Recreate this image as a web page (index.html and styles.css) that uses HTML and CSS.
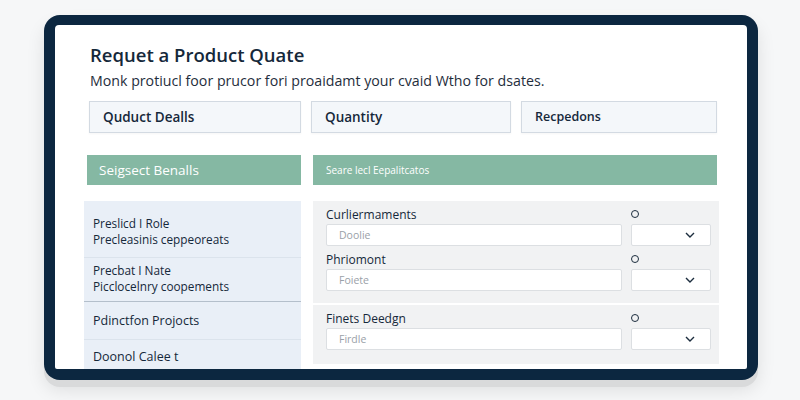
FILE: index.html
```html
<!DOCTYPE html>
<html lang="en">

<head>
    <meta charset="UTF-8">
    <meta name="viewport" content="width=device-width, initial-scale=1.0">
    <title>Request a Product Quote</title>
    <link rel="stylesheet" href="styles.css">
</head>

<body>
    <div class="device">
        <div class="screen">
            <h1 class="title">Requet a Product Quate</h1>
            <p class="lead">Monk protiucl foor prucor fori proaidamt your cvaid Wtho for dsates.</p>

            <div class="tabs">
                <div class="tab">Quduct Dealls</div>
                <div class="tab">Quantity</div>
                <div class="tab tab-small">Recpedons</div>
            </div>

            <div class="cols">
                <div class="side">
                    <div class="bar">Seigsect Benalls</div>
                    <ul class="list">
                        <li class="item item-first">
                            <span>Preslicd I Role</span>
                            <span>Precleasinis ceppeoreats</span>
                        </li>
                        <li class="item item-second">
                            <span>Precbat I Nate</span>
                            <span>Picclocelnry coopements</span>
                        </li>
                        <li class="item item-single">Pdinctfon Projocts</li>
                        <li class="item item-single item-last">Doonol Calee t</li>
                    </ul>
                </div>

                <div class="main">
                    <div class="bar bar-small">Seare lecl Eepalitcatos</div>
                    <div class="group">
                        <div class="field">
                            <label>Curliermaments</label>
                            <span class="dot"></span>
                            <div class="input">Doolie</div>
                            <div class="select">
                                <svg width="10" height="6" viewBox="0 0 10 6"><path d="M1 1l4 4 4-4" fill="none" stroke="#1c2d3e" stroke-width="1.4"/></svg>
                            </div>
                        </div>
                        <div class="field">
                            <label>Phriomont</label>
                            <span class="dot"></span>
                            <div class="input">Foiete</div>
                            <div class="select">
                                <svg width="10" height="6" viewBox="0 0 10 6"><path d="M1 1l4 4 4-4" fill="none" stroke="#1c2d3e" stroke-width="1.4"/></svg>
                            </div>
                        </div>
                    </div>
                    <div class="group group-second">
                        <div class="field">
                            <label>Finets Deedgn</label>
                            <span class="dot"></span>
                            <div class="input">Firdle</div>
                            <div class="select">
                                <svg width="10" height="6" viewBox="0 0 10 6"><path d="M1 1l4 4 4-4" fill="none" stroke="#1c2d3e" stroke-width="1.4"/></svg>
                            </div>
                        </div>
                    </div>
                </div>
            </div>
        </div>
    </div>
</body>

</html>
```

FILE: styles.css
```css
* {
    margin: 0;
    padding: 0;
    box-sizing: border-box;
    font-family: "Open Sans", "Noto Sans", sans-serif;
}

body {
    background-color: #f6f7f8;
    width: 800px;
    height: 400px;
    overflow: hidden;
}

.device {
    margin: 15px 0 0 44px;
    width: 714px;
    height: 365px;
    padding: 10px 11px 11px 11px;
    background-color: #0c2740;
    border-radius: 16px;
    box-shadow: 0 7px 0 #d9dadb, 0 10px 18px rgba(0, 0, 0, 0.10);
}

.screen {
    height: 100%;
    background-color: #ffffff;
    border-radius: 4px 4px 2px 2px;
    padding: 18px 30px 0 32px;
    overflow: hidden;
    color: #1b2b3b;
}

.title {
    padding-left: 3px;
    font-size: 18.5px;
    font-weight: 600;
    line-height: 24px;
    color: #15283a;
}

.lead {
    margin-top: 5px;
    padding-left: 3px;
    font-size: 14.2px;
    line-height: 18px;
    color: #1f2e3c;
}

.tabs {
    margin-top: 11px;
    display: grid;
    grid-template-columns: 212px 200px 1fr;
    gap: 10px;
    padding-left: 2px;
}

.tab {
    height: 32px;
    line-height: 30px;
    padding-left: 13px;
    background-color: #f4f7fa;
    border: 1px solid #d3dae2;
    box-shadow: 0 1px 2px rgba(0, 0, 0, 0.04);
    font-size: 13.5px;
    font-weight: 600;
    color: #16283a;
}

.tab-small {
    font-size: 12.5px;
}

.cols {
    margin-top: 22px;
    display: grid;
    grid-template-columns: 214px 1fr;
    gap: 12px;
}

.bar {
    height: 30px;
    line-height: 30px;
    padding-left: 12px;
    background-color: #85b8a3;
    color: #ffffff;
    font-size: 13.5px;
    font-weight: 500;
}

.bar-small {
    font-size: 10px;
    padding-left: 13px;
}

.list {
    list-style: none;
    margin-top: 16px;
    margin-left: -3px;
    background-color: #e9eff7;
}

.item {
    display: flex;
    flex-direction: column;
    padding-left: 9px;
    font-size: 11.8px;
    line-height: 16px;
    color: #15283a;
    border-bottom: 1px solid #dbe3ec;
}

.item-first {
    height: 57px;
    padding-top: 14px;
}

.item-second {
    height: 44px;
    padding-top: 4px;
    border-bottom-color: #b4bfcb;
}

.item-single {
    height: 38px;
    justify-content: center;
    font-size: 12.5px;
}

.item-last {
    height: 40px;
    justify-content: flex-start;
    padding-top: 9px;
    border-bottom: none;
}

.group {
    margin-top: 16px;
    background-color: #f1f2f3;
    padding: 6px 8px 12px 13px;
    margin-right: -2px;
}

.group-second {
    margin-top: 2px;
    padding-top: 6px;
    padding-bottom: 14px;
}

.field {
    display: grid;
    grid-template-columns: 1fr 80px;
    column-gap: 9px;
    margin-bottom: 6px;
}

.field:last-child {
    margin-bottom: 0;
}

.field label {
    font-size: 12px;
    font-weight: 500;
    line-height: 16px;
    color: #15283a;
}

.dot {
    width: 8px;
    height: 8px;
    margin-top: 3px;
    border: 1.6px solid #1c2d3e;
    border-radius: 50%;
}

.input {
    margin-top: 1px;
    height: 22px;
    line-height: 20px;
    padding-left: 12px;
    background-color: #ffffff;
    border: 1px solid #dcdfe2;
    border-radius: 2px;
    font-size: 10.5px;
    color: #9aa1a8;
}

.select {
    margin-top: 1px;
    height: 22px;
    display: flex;
    align-items: center;
    justify-content: flex-end;
    padding-right: 15px;
    background-color: #ffffff;
    border: 1px solid #dcdfe2;
    border-radius: 2px;
}
```
